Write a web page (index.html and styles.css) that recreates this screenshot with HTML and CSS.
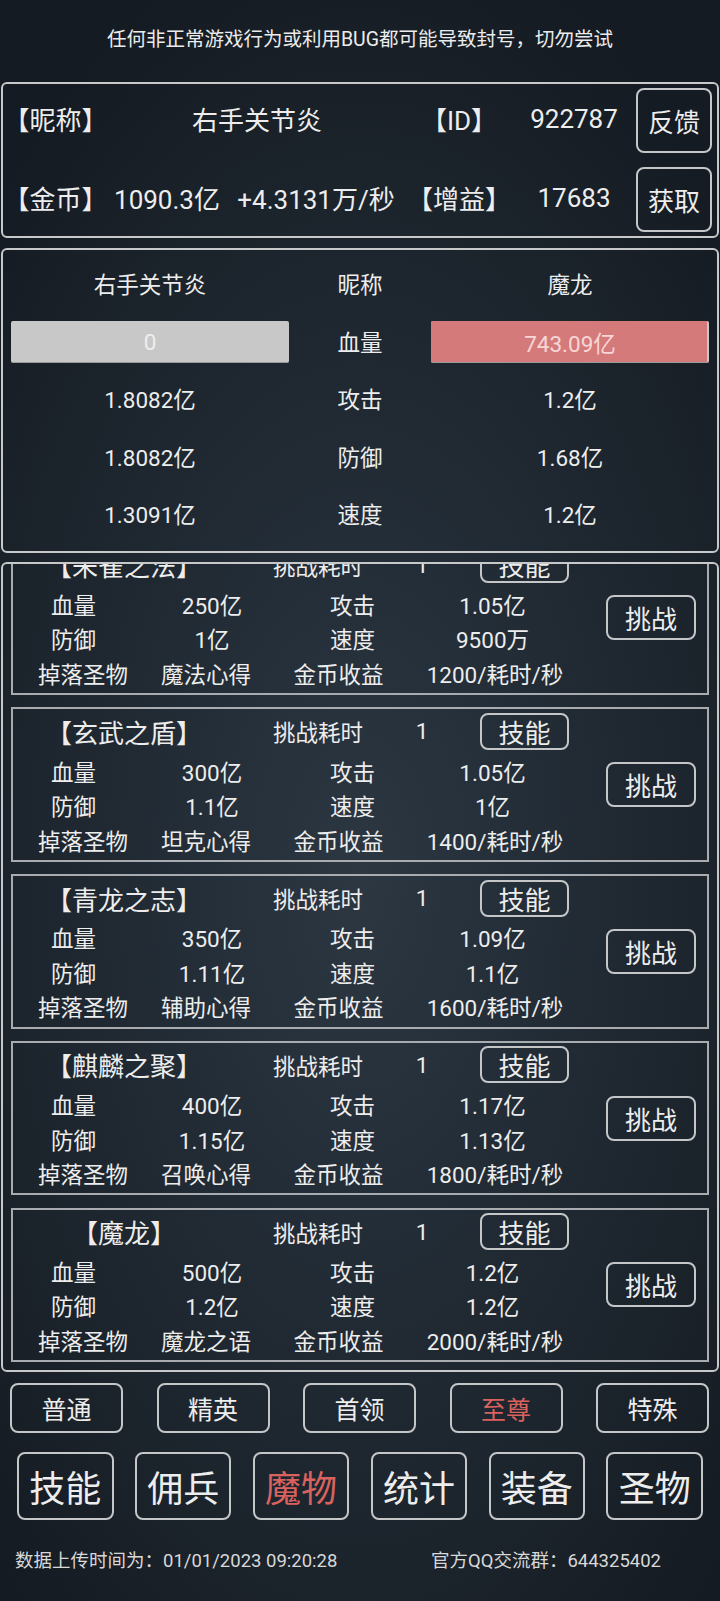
FILE: index.html
```html
<!DOCTYPE html>
<html lang="zh-CN">
<head>
    <meta charset="UTF-8">
    <meta name="viewport" content="width=device-width, initial-scale=1.0">
    <title>魔物</title>
    <link rel="stylesheet" href="styles.css">
</head>
<body>
    <div class="notice">任何非正常游戏行为或利用BUG都可能导致封号，切勿尝试</div>

    <div class="panel info">
        <div class="cell">【昵称】</div>
        <div class="cell span2">右手关节炎</div>
        <div class="cell">【ID】</div>
        <div class="cell">922787</div>
        <div class="btn info-btn">反馈</div>

        <div class="cell">【金币】</div>
        <div class="cell">1090.3亿</div>
        <div class="cell">+4.3131万/秒</div>
        <div class="cell">【增益】</div>
        <div class="cell">17683</div>
        <div class="btn info-btn">获取</div>
    </div>

    <div class="panel battle">
        <div class="cell">右手关节炎</div>
        <div class="cell">昵称</div>
        <div class="cell">魔龙</div>

        <div class="cell"><div class="bar"><span class="bar-text">0</span></div></div>
        <div class="cell">血量</div>
        <div class="cell"><div class="bar"><div class="bar-fill" style="width: 99.3%"></div><span class="bar-text pink">743.09亿</span></div></div>

        <div class="cell">1.8082亿</div>
        <div class="cell">攻击</div>
        <div class="cell">1.2亿</div>

        <div class="cell">1.8082亿</div>
        <div class="cell">防御</div>
        <div class="cell">1.68亿</div>

        <div class="cell">1.3091亿</div>
        <div class="cell">速度</div>
        <div class="cell">1.2亿</div>
    </div>

    <div class="panel monsters">
        <div class="mon-list">
            <div class="card">
                <div class="card-body">
                    <div class="row row-head">
                        <div class="cell title">【朱雀之法】</div>
                        <div class="cell">挑战耗时</div>
                        <div class="cell">1</div>
                        <div class="cell"><div class="btn skill-btn">技能</div></div>
                    </div>
                    <div class="row row-stat">
                        <div class="cell">血量</div><div class="cell">250亿</div><div class="cell">攻击</div><div class="cell">1.05亿</div>
                    </div>
                    <div class="row row-stat">
                        <div class="cell">防御</div><div class="cell">1亿</div><div class="cell">速度</div><div class="cell">9500万</div>
                    </div>
                    <div class="row row-drop">
                        <div class="cell">掉落圣物</div><div class="cell">魔法心得</div><div class="cell">金币收益</div><div class="cell">1200/耗时/秒</div>
                    </div>
                </div>
                <div class="btn fight-btn">挑战</div>
            </div>

            <div class="card">
                <div class="card-body">
                    <div class="row row-head">
                        <div class="cell title">【玄武之盾】</div>
                        <div class="cell">挑战耗时</div>
                        <div class="cell">1</div>
                        <div class="cell"><div class="btn skill-btn">技能</div></div>
                    </div>
                    <div class="row row-stat">
                        <div class="cell">血量</div><div class="cell">300亿</div><div class="cell">攻击</div><div class="cell">1.05亿</div>
                    </div>
                    <div class="row row-stat">
                        <div class="cell">防御</div><div class="cell">1.1亿</div><div class="cell">速度</div><div class="cell">1亿</div>
                    </div>
                    <div class="row row-drop">
                        <div class="cell">掉落圣物</div><div class="cell">坦克心得</div><div class="cell">金币收益</div><div class="cell">1400/耗时/秒</div>
                    </div>
                </div>
                <div class="btn fight-btn">挑战</div>
            </div>

            <div class="card">
                <div class="card-body">
                    <div class="row row-head">
                        <div class="cell title">【青龙之志】</div>
                        <div class="cell">挑战耗时</div>
                        <div class="cell">1</div>
                        <div class="cell"><div class="btn skill-btn">技能</div></div>
                    </div>
                    <div class="row row-stat">
                        <div class="cell">血量</div><div class="cell">350亿</div><div class="cell">攻击</div><div class="cell">1.09亿</div>
                    </div>
                    <div class="row row-stat">
                        <div class="cell">防御</div><div class="cell">1.11亿</div><div class="cell">速度</div><div class="cell">1.1亿</div>
                    </div>
                    <div class="row row-drop">
                        <div class="cell">掉落圣物</div><div class="cell">辅助心得</div><div class="cell">金币收益</div><div class="cell">1600/耗时/秒</div>
                    </div>
                </div>
                <div class="btn fight-btn">挑战</div>
            </div>

            <div class="card">
                <div class="card-body">
                    <div class="row row-head">
                        <div class="cell title">【麒麟之聚】</div>
                        <div class="cell">挑战耗时</div>
                        <div class="cell">1</div>
                        <div class="cell"><div class="btn skill-btn">技能</div></div>
                    </div>
                    <div class="row row-stat">
                        <div class="cell">血量</div><div class="cell">400亿</div><div class="cell">攻击</div><div class="cell">1.17亿</div>
                    </div>
                    <div class="row row-stat">
                        <div class="cell">防御</div><div class="cell">1.15亿</div><div class="cell">速度</div><div class="cell">1.13亿</div>
                    </div>
                    <div class="row row-drop">
                        <div class="cell">掉落圣物</div><div class="cell">召唤心得</div><div class="cell">金币收益</div><div class="cell">1800/耗时/秒</div>
                    </div>
                </div>
                <div class="btn fight-btn">挑战</div>
            </div>

            <div class="card">
                <div class="card-body">
                    <div class="row row-head">
                        <div class="cell title">【魔龙】</div>
                        <div class="cell">挑战耗时</div>
                        <div class="cell">1</div>
                        <div class="cell"><div class="btn skill-btn">技能</div></div>
                    </div>
                    <div class="row row-stat">
                        <div class="cell">血量</div><div class="cell">500亿</div><div class="cell">攻击</div><div class="cell">1.2亿</div>
                    </div>
                    <div class="row row-stat">
                        <div class="cell">防御</div><div class="cell">1.2亿</div><div class="cell">速度</div><div class="cell">1.2亿</div>
                    </div>
                    <div class="row row-drop">
                        <div class="cell">掉落圣物</div><div class="cell">魔龙之语</div><div class="cell">金币收益</div><div class="cell">2000/耗时/秒</div>
                    </div>
                </div>
                <div class="btn fight-btn">挑战</div>
            </div>
        </div>
    </div>

    <div class="tabs-small">
        <div class="btn tab-s">普通</div>
        <div class="btn tab-s">精英</div>
        <div class="btn tab-s">首领</div>
        <div class="btn tab-s active">至尊</div>
        <div class="btn tab-s">特殊</div>
    </div>

    <div class="tabs-big">
        <div class="btn tab-b">技能</div>
        <div class="btn tab-b">佣兵</div>
        <div class="btn tab-b active">魔物</div>
        <div class="btn tab-b">统计</div>
        <div class="btn tab-b">装备</div>
        <div class="btn tab-b">圣物</div>
    </div>

    <div class="footer">
        <span>数据上传时间为：01/01/2023 09:20:28</span>
        <span>官方QQ交流群：644325402</span>
    </div>
</body>
</html>
```

FILE: styles.css
```css
body {
    margin: 0;
    width: 720px;
    height: 1601px;
    overflow: hidden;
    font-family: Roboto, "Noto Sans CJK SC", sans-serif;
    color: #ededed;
    background: radial-gradient(ellipse 70% 60% at 50% 55%, #2c3742 0%, #1f2831 55%, #151b22 100%);
}

.notice {
    height: 82px;
    line-height: 80px;
    text-align: center;
    font-size: 19.5px;
    color: #ececec;
}

.panel {
    margin: 0 1px;
    border: 2px solid #c6c8ca;
    border-radius: 6px;
    box-sizing: border-box;
}

.cell {
    display: flex;
    align-items: center;
    justify-content: center;
    white-space: nowrap;
}

.btn {
    display: flex;
    align-items: center;
    justify-content: center;
    border: 2px solid #c4c6c8;
    border-radius: 8px;
    box-sizing: border-box;
    white-space: nowrap;
}

/* 顶部信息 */
.info {
    display: grid;
    grid-template-columns: 105px 118px 180px 106px 124px 76px;
    grid-auto-rows: 65px;
    row-gap: 14px;
    padding: 4px 0;
    font-size: 26px;
}
.info .cell {
    padding-bottom: 4px;
}
.span2 {
    grid-column: span 2;
}
.info-btn {
    font-size: 26px;
}

/* 对战面板 */
.battle {
    margin-top: 10px;
    display: grid;
    grid-template-columns: 278px 142px 278px;
    grid-auto-rows: 57.5px;
    padding: 6px 8px 7px;
    font-size: 22.5px;
}
.battle .cell {
    padding-bottom: 3px;
}
.bar {
    position: relative;
    width: 100%;
    height: 42px;
    margin-top: 3px;
    background: #c8c8c8;
    border-radius: 2px;
    border-bottom: 1px solid #9a9a9a;
    box-sizing: border-box;
    display: flex;
    align-items: center;
    justify-content: center;
    overflow: hidden;
}
.bar-fill {
    position: absolute;
    left: 0;
    top: 0;
    bottom: 0;
    background: #d57a7a;
}
.bar-text {
    position: relative;
    color: #eeeeee;
}
.bar-text.pink {
    color: #f7d6d6;
}

/* 魔物列表 */
.monsters {
    margin-top: 9px;
    height: 810px;
    padding: 0 8px;
    overflow: hidden;
}
.mon-list {
    margin-top: -23px;
}
.card {
    display: grid;
    grid-template-columns: 1fr 90px;
    border: 2px solid #a8acb0;
    padding: 3px 11px 3px 0;
    margin-bottom: 12.3px;
    font-size: 22.5px;
}
.row {
    display: grid;
    height: 34.5px;
}
.row-head {
    height: 38px;
    margin-bottom: 3px;
    grid-template-columns: 222px 166px 42px 163px;
}
.row-stat {
    grid-template-columns: 121px 156px 125px 155px;
}
.row-drop {
    grid-template-columns: 140px 106px 159px 154px;
}
.title {
    font-size: 26px;
}
.skill-btn {
    width: 89px;
    height: 37px;
    font-size: 26px;
}
.fight-btn {
    align-self: center;
    height: 45px;
    font-size: 26px;
}

/* 底部标签 */
.tabs-small {
    display: flex;
    justify-content: space-between;
    padding: 0 11px 0 10px;
    margin-top: 11.5px;
}
.tab-s {
    width: 113px;
    height: 50px;
    font-size: 25px;
}
.tabs-big {
    display: flex;
    justify-content: space-between;
    padding: 0 17px;
    margin-top: 18.5px;
}
.tab-b {
    width: 96.5px;
    height: 68px;
    font-size: 36px;
}
.active {
    color: #d9625f;
}

.footer {
    display: flex;
    justify-content: space-between;
    padding: 0 59px 0 15px;
    margin-top: 26px;
    line-height: 30px;
    font-size: 18.5px;
    color: #d8d8d8;
}
```
